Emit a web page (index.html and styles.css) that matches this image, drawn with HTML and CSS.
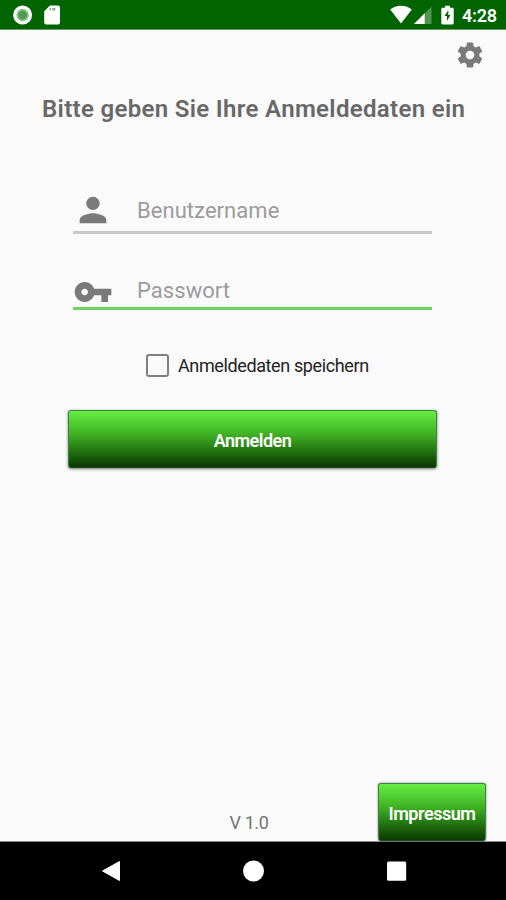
FILE: index.html
```html
<!DOCTYPE html>
<html lang="de">
<head>
<meta charset="utf-8">
<title>Anmeldung</title>
<link rel="stylesheet" href="styles.css">
</head>
<body>
<div class="screen">
  <header class="status">
    <svg class="sync" width="20" height="20" viewBox="0 0 20 20"><circle cx="9.600" cy="10" r="7.700" fill="none" stroke="#fff" stroke-width="3.6"/><circle cx="9.600" cy="10" r="5.9" fill="#9bc99b"/><circle cx="9.600" cy="10" r="4.500" fill="#4f9b4f"/></svg>
    <svg class="card" width="16" height="20" viewBox="0 0 16 20"><path fill="#fff" d="M6 .5h8a2 2 0 0 1 2 2v15a2 2 0 0 1-2 2H2.200a2 2 0 0 1-2-2V6.300z"/><path fill="#8fa98f" d="M5.500 3h1.600v2.500H5.500zM8.300 3h3v2.500h-3z"/></svg>
    <svg class="wifi" width="22" height="19" viewBox="0 0 22 19"><path fill="#fff" d="M11 18.500.2 4.600C3 2.200 6.800.7 11 .7s8 1.500 10.800 3.900z"/></svg>
    <svg class="signal" width="19" height="19" viewBox="0 0 19 19"><path fill="#4d964d" d="M18.500 1.500v18H.5z"/><path fill="#fff" d="M11.700 8.300v11.200H.5z"/></svg>
    <svg class="battery" width="13" height="20" viewBox="0 0 13 20"><path fill="#fff" d="M4 .7h5v2h2.300c.8 0 1.400.6 1.400 1.400v14c0 .8-.6 1.400-1.400 1.400H1.700c-.8 0-1.400-.6-1.400-1.400v-14c0-.8.6-1.400 1.400-1.400H4z"/><path fill="#006400" d="M7.300 5.300 3.500 11h2.400v5l3.600-6H7.300z"/></svg>
    <span class="clock">4:28</span>
  </header>
  <main class="content">
    <svg class="gear" width="30" height="30" viewBox="0 0 24 24"><path fill="#7a7a7a" d="M19.430 12.980c.04-.32.070-.64.070-.98s-.03-.66-.07-.98l2.110-1.650c.19-.15.24-.42.12-.64l-2-3.460c-.12-.22-.39-.3-.61-.22l-2.490 1c-.52-.4-1.080-.73-1.690-.98l-.38-2.650C14.460 2.180 14.250 2 14 2h-4c-.25 0-.46.18-.49.42l-.38 2.650c-.61.25-1.170.59-1.690.98l-2.490-1c-.23-.09-.49 0-.61.22l-2 3.460c-.13.22-.07.49.12.64l2.110 1.650c-.04.32-.07.65-.07.98s.03.66.07.98l-2.110 1.650c-.19.15-.24.42-.12.64l2 3.460c.12.22.39.3.61.22l2.490-1c.52.4 1.080.73 1.690.98l.38 2.650c.03.24.24.42.49.42h4c.25 0 .46-.18.49-.42l.38-2.650c.61-.25 1.170-.59 1.690-.98l2.490 1c.23.09.49 0 .61-.22l2-3.460c.12-.22.07-.49-.12-.64zM12 15.500c-1.930 0-3.500-1.570-3.500-3.500s1.570-3.500 3.500-3.500 3.500 1.570 3.500 3.500-1.570 3.500-3.500 3.500z"/></svg>
    <h1 class="title">Bitte geben Sie Ihre Anmeldedaten ein</h1>
    <div class="field user">
      <svg width="40" height="40" viewBox="0 0 24 24"><path fill="#7a7a7a" d="M12 12c2.210 0 4-1.790 4-4s-1.790-4-4-4-4 1.790-4 4 1.790 4 4 4zm0 2c-2.670 0-8 1.340-8 4v2h16v-2c0-2.660-5.330-4-8-4z"/></svg>
      <span class="hint">Benutzername</span>
    </div>
    <div class="field pass">
      <svg width="40" height="40" viewBox="0 0 24 24"><path fill="#7a7a7a" d="M12.650 10C11.830 7.670 9.610 6 7 6c-3.310 0-6 2.690-6 6s2.690 6 6 6c2.610 0 4.830-1.670 5.650-4H17v4h4v-4h2v-4H12.650zM7 14c-1.100 0-2-.9-2-2s.9-2 2-2 2 .9 2 2-.9 2-2 2z"/></svg>
      <span class="hint">Passwort</span>
    </div>
    <label class="remember"><span class="box"></span><span class="remember-text">Anmeldedaten speichern</span></label>
    <button class="btn login"><span>Anmelden</span></button>
    <footer class="bottom">
      <span class="version">V 1.0</span>
      <button class="btn imprint"><span>Impressum</span></button>
    </footer>
  </main>
  <nav class="nav">
    <svg width="20" height="22" viewBox="0 0 20 22"><path fill="#fff" stroke="#fff" stroke-linejoin="round" d="M18.500 1.500v19L1.500 11z"/></svg>
    <svg width="22" height="22" viewBox="0 0 22 22"><circle cx="10.500" cy="11" r="10.500" fill="#fff"/></svg>
    <svg width="20" height="20" viewBox="0 0 20 20"><rect x="0" y=".5" width="19.200" height="19.200" rx="1.500" fill="#fff"/></svg>
  </nav>
</div>
</body>
</html>
```
FILE: styles.css
```css
* { box-sizing: border-box; }
body { margin: 0; font-family: Roboto, "Liberation Sans", sans-serif; }
svg { display: block; flex: none; }
.screen { width: 506px; height: 900px; display: flex; flex-direction: column; background: #fafafa; overflow: hidden; }
.status { height: 30px; flex: none; display: flex; align-items: flex-start; background: #006400; border-bottom: 1px solid #669b66; padding: 5px 0 0 13px; }
.card { margin-left: 11px; }
.wifi { margin-left: 330px; }
.signal { margin-left: 1px; }
.battery { margin-left: 9px; }
.clock { margin-left: 8px; color: #fff; font-size: 18px; letter-spacing: -.2px; line-height: 22px; font-weight: 600; white-space: nowrap; }
.content { height: 812px; flex: none; display: flex; flex-direction: column; border-bottom: 1px solid #888; }
.gear { align-self: flex-end; margin: 10px 21px 0 0; }
.title { margin: 22px 0 0 42px; height: 34px; font-size: 24px; line-height: 34px; font-weight: 600; letter-spacing: .33px; color: #686868; white-space: nowrap; }
.field { width: 359px; margin-left: 73px; display: flex; }
.user { height: 44px; margin-top: 64px; border-bottom: 3px solid #c8c8c8; }
.pass { height: 38px; margin-top: 38px; border-bottom: 3px solid #70d06c; }
.hint { margin-left: 24px; font-size: 22px; letter-spacing: .05px; line-height: 42px; color: #9c9c9c; white-space: nowrap; }
.pass .hint { line-height: 38px; }
.field svg { margin-left: -.5px; margin-right: .5px; }
.remember { display: flex; align-items: center; height: 24px; margin: 43px 0 0 146px; }
.box { width: 23px; height: 23px; border: 2px solid #808080; border-radius: 3px; }
.remember-text { margin: 1px 0 0 9px; font-size: 18px; letter-spacing: -.38px; color: #222; white-space: nowrap; }
.btn { display: flex; align-items: center; justify-content: center; padding: 2px 0 0; border: 1px solid #3c8245; border-bottom-color: #1c4a22; border-radius: 3px; background: linear-gradient(#65ee42, #41b324 40%, #237712 70%, #0b3802); color: #fff; font-family: inherit; font-size: 18px; letter-spacing: -.5px; font-weight: 600; }
.login { width: 369px; height: 58px; margin: 33px 0 0 68px; box-shadow: 0 1px 3px rgba(0, 0, 0, .55); }
.bottom { margin-top: auto; height: 58px; display: flex; }
.version { width: 149px; margin-left: 229.500px; font-size: 18px; letter-spacing: -.4px; line-height: 79px; color: #757575; white-space: nowrap; }
.imprint { width: 108px; height: 58px; margin-left: -.5px; letter-spacing: -.45px; box-shadow: 0 0 2px rgba(0, 0, 0, .6); }
.nav { height: 58px; flex: none; display: flex; align-items: center; padding-left: 101px; gap: 122px; background: #000; }
```
